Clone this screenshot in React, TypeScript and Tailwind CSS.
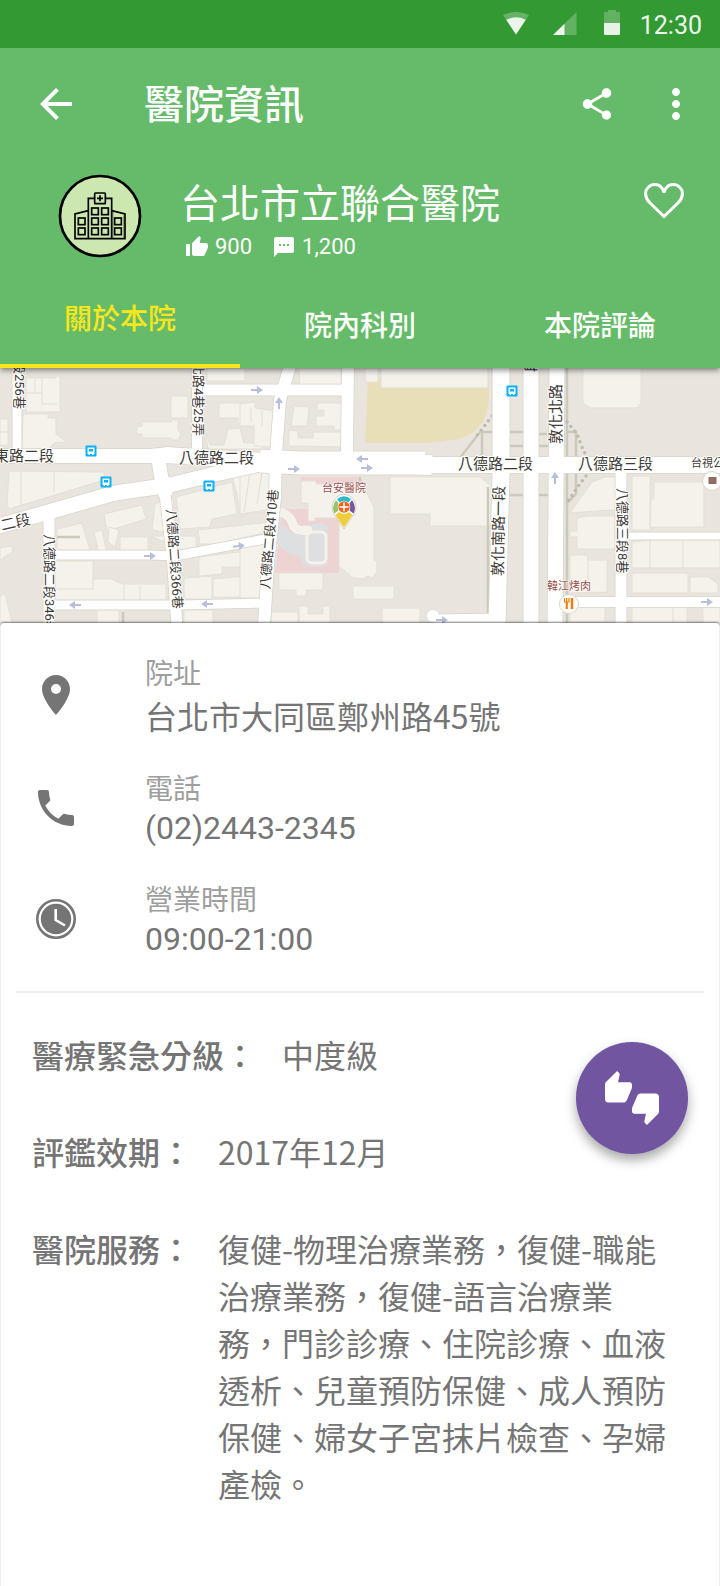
import type { ReactNode } from "react";
import {
  MdArrowBack,
  MdMoreVert,
  MdPhone,
  MdPlace,
  MdShare,
  MdTextsms,
  MdThumbUp,
  MdThumbsUpDown,
} from "react-icons/md";

function StatusBar() {
  return (
    <div className="flex h-12 items-center justify-end bg-[#339933] pr-[18px] text-white/90">
      <svg className="mr-[22px] h-[26px] w-[28px]" viewBox="0 0 28 26" aria-hidden="true">
        <path d="M14 23.500 L1 4 Q14 -2 27 4 Z" fill="#fff" opacity=".25" />
        <path d="M14 23.500 L4.200 8.700 Q14 4 23.800 8.700 Z" fill="#fff" opacity=".87" />
      </svg>
      <svg className="mr-[26px] h-[26px] w-[25px]" viewBox="0 0 25 26" aria-hidden="true">
        <path d="M24.500 1 V24 H1 Z" fill="#fff" opacity=".24" />
        <path d="M12.500 12.700 V24 H1 Z" fill="#fff" opacity=".87" />
      </svg>
      <svg className="mr-[19px] h-[28px] w-[18px]" viewBox="0 0 18 28" aria-hidden="true">
        <path d="M5 0 H13 V2 H16 Q17 2 17 3 V13 H1 V3 Q1 2 2 2 H5 Z" fill="#fff" opacity=".24" />
        <path d="M1 13 H17 V24 Q17 25 16 25 H2 Q1 25 1 24 Z" fill="#fff" opacity=".88" />
      </svg>
      <span className="pt-1 text-[25px] leading-[30px]">12:30</span>
    </div>
  );
}

const WINDOWS: [number, number][] = [
  [275, 143], [305, 143],
  [275, 173], [305, 173],
  [275, 203], [305, 203],
  [235, 173], [235, 203],
  [344, 173], [344, 203],
];

function HospitalAvatar() {
  return (
    <svg className="size-[84px] shrink-0" viewBox="174 41 252 252" role="img" aria-label="醫院">
      <circle cx="300" cy="167" r="120" fill="#cce7b0" stroke="#000" strokeWidth="8" />
      <g fill="none" stroke="#000" strokeWidth="5">
        <path d="M284 114 H265 V235 M316 114 H335 V235" />
        <rect x="284" y="98" width="32" height="32" rx="2" />
        <path d="M300 105 V123 M291 114 H309" />
        <path d="M265 151 L225 161 V235 H375 V161 L335 151" />
        <path d="M371 165 V232 M339 155 V232" strokeWidth="2" opacity=".6" />
        {WINDOWS.map(([x, y]) => (
          <rect key={`${x}-${y}`} x={x} y={y} width="20" height="20" />
        ))}
      </g>
    </svg>
  );
}

function HeartIcon() {
  return (
    <svg className="h-9 w-10" viewBox="0 0 40 36" fill="none" stroke="#fff" strokeWidth="3" aria-hidden="true">
      <path d="M20 33.500 L6 20 C0.500 14.500 0.500 8 4 4.500 C8 0.500 14 0.800 17.300 4.300 C19 6 19.900 7.800 20 10 C20.100 7.800 21 6 22.700 4.300 C26 0.800 32 0.500 36 4.500 C39.500 8 39.500 14.500 34 20 Z" />
    </svg>
  );
}

function Header() {
  return (
    <header className="relative z-10 bg-[#66bb6a] text-white shadow-[0_2px_6px_rgba(0,0,0,0.5)]">
      <StatusBar />
      <div className="flex h-28 items-center pl-8 pr-5">
        <button type="button" aria-label="返回">
          <MdArrowBack className="size-12" />
        </button>
        <h1 className="ml-16 flex-1 pt-1 text-[40px] font-medium leading-[56px]">醫院資訊</h1>
        <button type="button" aria-label="分享" className="mr-9">
          <MdShare className="size-[38px]" />
        </button>
        <button type="button" aria-label="更多">
          <MdMoreVert className="size-12" />
        </button>
      </div>
      <div className="flex h-[112px] items-start pl-[58px] pr-9 pt-[14px]">
        <HospitalAvatar />
        <div className="ml-[38px] flex-1 pt-1">
          <h2 className="text-[40px] leading-[54px]">台北市立聯合醫院</h2>
          <div className="flex items-center gap-5 pl-[5px] text-[22px] leading-[30px]">
            <span className="flex items-center gap-[6px]">
              <MdThumbUp className="size-6" />
              900
            </span>
            <span className="flex items-center gap-[6px]">
              <MdTextsms className="size-6" />
              1,200
            </span>
          </div>
        </div>
        <button type="button" aria-label="加入收藏" className="mt-[9px]">
          <HeartIcon />
        </button>
      </div>
      <nav className="grid h-24 grid-cols-3 text-[28px] font-medium leading-10" role="tablist">
        <button
          type="button"
          role="tab"
          aria-selected="true"
          className="border-b-4 border-[#f8e71c] pt-1 text-[#f8e71c]"
        >
          關於本院
        </button>
        <button type="button" role="tab" aria-selected="false" className="pt-[14px]">
          院內科別
        </button>
        <button type="button" role="tab" aria-selected="false" className="pt-[14px]">
          本院評論
        </button>
      </nav>
    </header>
  );
}

const ROADS: [string, number][] = [
  ["M17 -5 V92", 9],
  ["M197 -5 V90", 10],
  ["M49 145 V265", 11],
  ["M55 191 H150 L175 192 L260 176 L272 173", 9],
  ["M55 241 H180 L270 239", 9],
  ["M203 26 H342", 11],
  ["M292 -5 L280 36 L276 90 L275 133 L268 200 L264 262", 12],
  ["M348 -5 L347 90", 12],
  ["M158 92 L161 112 L166 132", 14],
  ["M165 130 L172 190 L177 262", 11],
  ["M-5 92 H150 L170 90", 14],
  ["M165 91 L215 94 L300 99", 16],
  ["M260 97 L300 99 H425", 23],
  ["M415 100 L432 101", 20],
  ["M420 101 H725", 16],
  ["M-5 163 L45 149 L115 129 L170 121 L215 110 L265 99", 15],
  ["M501 -5 V110 L497 262", 17],
  ["M531 -5 V265", 15],
  ["M557 -5 L555 262", 15],
  ["M621 108 V265", 11],
  ["M626 172 H725", 7],
  ["M562 238 H725", 10],
  ["M434 257 L500 256", 13],
];

const BUILDINGS = [
  "M26 14 H56 V12 H60 V48 H26 Z",
  "M23 50 H48 V54 H56 V70 L67 78 L54 79 L48 86 H22 Z",
  "M0 55 H8 V81 H0 Z",
  "M171 32 H188 V54 H171 Z",
  "M142 62 V58 H171 V56 H178 V66 L181 70 L178 76 H173 L170 74 H142 V70 H137 V63 Z",
  "M207 4 H245 V17 H207 Z",
  "M219 39 H250 V60 H238 V54 H219 Z",
  "M205 66 L210 81 H224 L228 65 L240 64 L244 79 H262 V85 H208 Z",
  "M9 107 L104 108 L104 116 L9 145 L7 140 Z",
  "M104 150 L142 141 L146 155 L107 167 Z",
  "M57 165 L82 159 L90 186 H57 Z",
  "M94 168 L102 166 L107 190 H99 Z",
  "M109 163 L119 166 L115 183 L108 178 Z",
  "M120 173 H148 V186 H120 Z",
  "M155 140 L173 134 L176 170 L152 166 Z",
  "M176 133 L232 118 L237 150 L212 155 L210 163 L180 165 Z",
  "M231 108 H274 L272 148 H240 L237 130 Z",
  "M198 166 L270 158 L268 168 L216 180 H200 Z",
  "M199 193 L270 184 V210 H240 V203 H222 V210 L199 212 Z",
  "M184 214 L212 212 V235 H184 Z",
  "M213 215 L268 210 V233 H213 Z",
  "M150 172 H196 V183 L182 186 L165 178 Z",
  "M55 197 H93 V215 H112 L122 220 H166 V236 H55 Z",
  "M97 246 H119 V262 H97 Z",
  "M184 246 H213 V262 H184 Z",
  "M240 40 L255 38 V44 L277 47 V83 L254 82 V62 H240 Z",
  "M299 4 H341 V26 L300 24 Z",
  "M294 42 L309 43 L307 62 H291 Z",
  "M317 39 H342 V66 H334 V62 H316 V52 H324 V46 H317 Z",
  "M289 66 L298 67 V74 H313 V68 H346 V83 L289 82 Z",
  "M240 108 H274 L273 145 L240 150 Z",
  "M240 178 L266 174 L262 234 H240 Z",
  "M279 209 H323 V226 H306 V232 H296 V226 H279 Z",
  "M353 222 H394 V235 H353 Z",
  "M271 248 H298 V262 H271 Z",
  "M299 242 H308 V250 H323 V242 H330 V262 H299 Z",
  "M382 244 H420 V262 H382 Z",
  "M365 4 H378 V18 H365 Z",
  "M390 113 H480 L491 122 V162 H430 V150 H390 Z",
  "M583 4 H641 V39 L637 44 H590 L583 39 Z",
  "M592 118 L605 113 H621 V146 H610 L570 149 Z",
  "M577 154 L587 152 H615 V185 H577 V173 H570 V167 H577 Z",
  "M570 191 H587 L588 196 H607 V228 L570 229 Z",
  "M632 112 H650 V166 H632 Z",
  "M654 118 H705 V163 H650 L651 135 H654 Z",
  "M632 178 L650 176 H720 V204 H632 Z",
  "M632 209 H688 V229 H632 Z",
  "M690 213 H709 L718 220 V229 H690 Z",
  "M570 241 H605 V258 H570 Z",
  "M632 241 H687 V262 H632 Z",
  "M703 242 H720 V262 H703 Z",
  "M0 184 L12 182 L13 187 L0 196 Z",
  "M0 232 L5 230 L13 262 H0 Z",
];

const ARROWS: [number, number, number][] = [
  [150, 192, 0],
  [239, 182, -8],
  [75, 241, 180],
  [207, 240, 180],
  [257, 26, 0],
  [279, 39, -90],
  [294, 105, 0],
  [362, 95, 180],
  [367, 104, 0],
  [442, 256, 0],
  [555, 114, -90],
  [707, 238, 0],
];

const BUS_STOPS: [number, number][] = [
  [91, 87],
  [106, 118],
  [209, 122],
  [512, 27],
];

function RoadLabel({ x, y, angle = 0, size = 15, children }: {
  x: number;
  y: number;
  angle?: number;
  size?: number;
  children: ReactNode;
}) {
  return (
    <text
      transform={`translate(${x} ${y}) rotate(${angle})`}
      fontSize={size}
      fill="#3f3c38"
      stroke="#fff"
      strokeWidth="2"
      strokeLinejoin="round"
      paintOrder="stroke"
      dominantBaseline="central"
    >
      {children}
    </text>
  );
}

function HospitalMap() {
  return (
    <svg className="block w-full" viewBox="0 4 720 255" role="img" aria-label="醫院位置地圖">
      <rect y="0" width="720" height="262" fill="#e9e5de" />
      <path d="M368 15 L489 16 V40 L483 58 L473 69 L460 75 L427 79 H365 Z" fill="#e8dfb9" />
      <path d="M381 4 H488 V24 H381 Z" fill="#f4f2eb" stroke="#e0ddd3" />
      <path d="M282 145 H307 L315 154 H339 V209 H275 Z M301 113 H358 V121 H301 Z" fill="#edd3d2" />
      <path d="M279 157 L292 170 L312 160 Q327 157 328 163 V197 Q327 203 320 203 H308 Q303 203 301 193 L288 189 L277 180 Z" fill="#dedfe1" />
      <g fill="#f4f2eb" stroke="#e3e0d7" strokeWidth="1">
        {BUILDINGS.map((d) => (
          <path key={d} d={d} />
        ))}
        <path d="M301 117 H316 V120 H362 L374 143 V196 L377 198 V208 L372 214 L367 212 L363 215 L353 214 L339 202 V154 H315 V157 H308 V139 H301 Z" />
      </g>
      <path d="M280 148 Q291 151 293 161 Q296 168 308 166" fill="none" stroke="#f4f2eb" strokeWidth="9" strokeLinecap="round" />
      <rect x="307" y="168" width="19" height="31" rx="5" fill="none" stroke="#f4f2eb" strokeWidth="3" />
      <g fill="none" stroke="#e2dfd5" strokeWidth="1">
        <path d="M21 108 V141 M54 108 V128 M26 29 H42 V14 M42 29 V40 H57 M35 14 V30 M93 215 V225 H56 M124 220 V236 M140 236 V222 M151 173 V186" />
        <path d="M250 108 L244 148 M262 108 L257 140 M251 44 V58 M262 46 V62 M650 176 V204 M683 176 V204 M704 118 V163 M588 196 V228 M673 241 V262 M0 68 H8" />
      </g>
      <g fill="none" stroke="#cbc9ba" strokeWidth="2.500">
        <path d="M508 68 H523 M539 70 H551 M508 82 H523 M539 82 H551 M508 131 H523 M539 131 H551 M482 92 V68 H494" />
        <path d="M493 4 V52 M567 4 V94 M567 68 H576 V92 L580 96 M567 110 V262 M576 110 V130 L566 140 M488 123 V250 M480 68 L460 94 M57 173 H80 M123 248 V262 M360 113 V125" />
      </g>
      <g fill="none" stroke="#bdbbae" strokeWidth="3.500" strokeLinecap="round" strokeDasharray="0 6">
        <path d="M567 58 L577 70 L582 83 L589 98 M586 112 L577 124 L568 137 M492 52 L483 64 L474 75" />
      </g>
      <g fill="none" stroke="#d8d4c8" strokeLinejoin="round">
        {ROADS.map(([d, width]) => (
          <path key={d} d={d} strokeWidth={width + 1.5} />
        ))}
      </g>
      <g fill="none" stroke="#fff" strokeLinejoin="round">
        {ROADS.map(([d, width]) => (
          <path key={d} d={d} strokeWidth={width} />
        ))}
      </g>
      <circle cx="433" cy="252" r="6" fill="#fff" />
      <g fill="#b9bfdb">
        {ARROWS.map(([x, y, angle]) => (
          <path
            key={`${x}-${y}`}
            transform={`translate(${x} ${y}) rotate(${angle})`}
            d="M-6 -1 H0 V-4 L6 0 L0 4 V1 H-6 Z"
          />
        ))}
      </g>

      <RoadLabel x={19} y={-3} angle={90} size={13}>段256巷</RoadLabel>
      <RoadLabel x={198} y={-2} angle={90} size={13}>北路4巷25弄</RoadLabel>
      <RoadLabel x={-6} y={92}>東路二段</RoadLabel>
      <RoadLabel x={179} y={94}>八德路二段</RoadLabel>
      <RoadLabel x={1} y={162} angle={-13}>二段</RoadLabel>
      <RoadLabel x={49} y={170} angle={90} size={13}>八德路二段346巷</RoadLabel>
      <RoadLabel x={171} y={145} angle={86} size={13}>八德路二段366巷</RoadLabel>
      <RoadLabel x={265} y={225} angle={-85} size={13}>八德路二段410巷</RoadLabel>
      <RoadLabel x={458} y={100}>八德路二段</RoadLabel>
      <RoadLabel x={578} y={100}>八德路三段</RoadLabel>
      <RoadLabel x={531} y={8} angle={-90}>段</RoadLabel>
      <RoadLabel x={556} y={80} angle={-90}>敦化北路</RoadLabel>
      <RoadLabel x={498} y={212} angle={-89}>敦化南路一段</RoadLabel>
      <RoadLabel x={622} y={124} angle={90} size={13}>八德路三段8巷</RoadLabel>
      <RoadLabel x={691} y={99} size={11}>台視公司</RoadLabel>
      <g fontSize="11" fill="#98504c" stroke="#fff" strokeWidth="1" paintOrder="stroke" dominantBaseline="central">
        <text x="322" y="124">台安醫院</text>
        <text x="547" y="222">韓江烤肉</text>
      </g>

      {BUS_STOPS.map(([x, y]) => (
        <g key={`${x}-${y}`} transform={`translate(${x} ${y})`}>
          <rect x="-5.500" y="-5.500" width="11" height="11" rx="1" fill="#03b1fc" />
          <path d="M-3.500 -3.500 H3.500 V3 H2.500 V4 H1 V3 H-1 V4 H-2.500 V3 H-3.500 Z" fill="#fff" />
          <path d="M-2 -2 H2 V0.500 H-2 Z" fill="#03b1fc" />
        </g>
      ))}

      <circle cx="569" cy="240" r="9.500" fill="#fff" stroke="#d9d5cc" />
      <g fill="none" stroke="#f57c00" strokeWidth="1.200">
        <path d="M564.500 234 V238 H569 V234 M566.700 234 V245" />
        <path d="M566.700 238 V245" strokeWidth="2" />
        <path d="M572 234 V245" strokeWidth="2.500" />
      </g>
      <circle cx="712" cy="117" r="9.500" fill="#fff" stroke="#d9d5cc" />
      <rect x="708.500" y="113" width="8" height="7" fill="#8d6e63" />

      <g transform="translate(344 143)">
        <path d="M0 22 L-10 7 C-15 -2 -9 -12.500 0 -12.500 C9 -12.500 15 -2 10 7 Z" fill="#fff" stroke="#c9c5bb" strokeWidth=".8" />
        <path d="M-7 -8 Q0 -13.500 7 -8 L4.500 -4.500 Q0 -8 -4.500 -4.500 Z" fill="#2fb8c9" />
        <path d="M-8 -7 Q-13 0 -9.500 6.500 L-5.500 3.500 Q-7 0 -5.500 -3.500 Z" fill="#94c564" />
        <path d="M8 -7 Q13 0 9.500 6.500 L5.500 3.500 Q7 0 5.500 -3.500 Z" fill="#7155a0" />
        <path d="M-8.500 8 L-5 5 Q0 9 5 5 L8.500 8 L0 20.500 Z" fill="#f0cd3a" />
        <circle r="5.700" fill="#f0641e" />
        <path d="M-4.500 0 H4.500 M0 -4.500 V4.500" stroke="#fff" strokeWidth="1.500" />
      </g>
    </svg>
  );
}

function ClockIcon() {
  return (
    <svg className="size-12" viewBox="0 0 48 48" aria-hidden="true">
      <circle cx="24" cy="24" r="18.700" fill="none" stroke="#757575" strokeWidth="2.600" />
      <circle cx="24" cy="24" r="15.200" fill="#757575" />
      <path d="M23.700 14 V25 L33 30.500" fill="none" stroke="#fff" strokeWidth="2.600" />
    </svg>
  );
}

function InfoRow({ icon, label, children }: { icon: ReactNode; label: string; children: ReactNode }) {
  return (
    <div className="flex items-center gap-[65px]">
      <span className="shrink-0 text-[#757575]">{icon}</span>
      <dl>
        <dt className="text-[28px] leading-10 text-[#9e9e9e]">{label}</dt>
        <dd className="text-[32px] leading-9 text-[#757575]">{children}</dd>
      </dl>
    </div>
  );
}

function DetailRow({ label, children }: { label: string; children: ReactNode }) {
  return (
    <div className="flex gap-[26px]">
      <dt className="shrink-0 font-medium">{label}</dt>
      <dd>{children}</dd>
    </div>
  );
}

export default function App() {
  return (
    <div
      lang="zh-Hant"
      className="flex min-h-screen flex-col bg-white font-[Roboto,'Noto_Sans_CJK_TC',sans-serif]"
    >
      <Header />
      <HospitalMap />
      <main className="relative flex-1 rounded-t-sm border-x border-[#eeeeee] bg-white pb-16 shadow-[0_-1px_2px_rgba(0,0,0,0.5)]">
        <section className="flex flex-col gap-[35px] pl-[31px] pr-8 pt-8">
          <InfoRow icon={<MdPlace className="size-12" />} label="院址">
            <span className="block font-['Noto_Sans_CJK_TC',sans-serif] leading-10">
              台北市大同區鄭州路45號
            </span>
          </InfoRow>
          <InfoRow icon={<MdPhone className="size-12" />} label="電話">
            (02)2443-2345
          </InfoRow>
          <InfoRow icon={<ClockIcon />} label="營業時間">
            09:00-21:00
          </InfoRow>
        </section>
        <hr className="mx-[15px] mt-[34px] border-t-2 border-[#eeeeee]" />
        <section className="relative">
          <dl className="flex flex-col gap-[50px] pl-[31px] pr-[50px] pt-[38px] font-['Noto_Sans_CJK_TC',sans-serif] text-[32px] leading-[47px] text-[#757575]">
            <DetailRow label="醫療緊急分級：">中度級</DetailRow>
            <DetailRow label="評鑑效期：">2017年12月</DetailRow>
            <DetailRow label="醫院服務：">
              復健-物理治療業務，復健-職能治療業務，復健-語言治療業務，門診診療、住院診療、血液透析、兒童預防保健、成人預防保健、婦女子宮抹片檢查、孕婦產檢。
            </DetailRow>
          </dl>
          <button
            type="button"
            aria-label="評價"
            className="absolute right-[31px] top-[49px] flex size-28 items-center justify-center rounded-full bg-[#7155a0] text-white shadow-[0_6px_12px_rgba(0,0,0,0.35)]"
          >
            <MdThumbsUpDown className="size-[54px]" />
          </button>
        </section>
      </main>
    </div>
  );
}
